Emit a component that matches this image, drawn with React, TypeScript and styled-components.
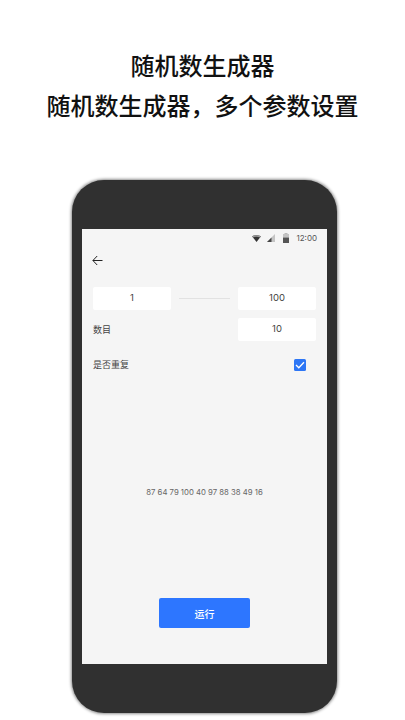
import React from 'react';
import styled, { createGlobalStyle } from 'styled-components';

const GlobalStyle = createGlobalStyle`
  html, body {
    margin: 0;
    padding: 0;
    background: #fff;
  }
  body {
    font-family: 'Inter', 'Noto Sans CJK SC', sans-serif;
  }
`;

const Page = styled.div`
  width: 405px;
  height: 720px;
  overflow: hidden;
  display: flex;
  flex-direction: column;
  align-items: center;
  background: #fff;
`;

const Heading = styled.h1`
  margin: 45px 0 55px;
  height: 80px;
  font-family: 'Noto Sans CJK SC', sans-serif;
  font-size: 24px;
  font-weight: 500;
  line-height: 40px;
  color: #111;
  text-align: center;
  white-space: nowrap;
`;

const Phone = styled.div`
  width: 265px;
  height: 533px;
  box-sizing: border-box;
  padding: 49px 10px;
  margin-left: 4px;
  border-radius: 32px;
  background: #303030;
  box-shadow: 0 0 3px 1px rgba(0, 0, 0, 0.45);
  flex-shrink: 0;
`;

const Screen = styled.div`
  height: 435px;
  background: #f5f5f5;
  display: flex;
  flex-direction: column;
`;

const StatusBar = styled.div`
  height: 18px;
  display: flex;
  align-items: center;
  justify-content: flex-end;
  padding: 0 10px;
  font-size: 8px;
  color: #555;
`;

const StatusIcon = styled.svg<{ $gap: number }>`
  margin-right: ${p => p.$gap}px;
`;

const BackRow = styled.div`
  height: 26px;
  padding-left: 10px;
  display: flex;
  align-items: center;
  color: #222;
`;

const Form = styled.div`
  padding: 14px 11px 0;
  display: flex;
  flex-direction: column;
  gap: 8px;
`;

const Row = styled.div`
  display: flex;
  align-items: center;
  justify-content: space-between;
  height: 23px;
`;

const Field = styled.div`
  width: 78px;
  height: 23px;
  line-height: 22px;
  border-radius: 2px;
  background: #fff;
  text-align: center;
  font-size: 9.5px;
  color: #444;
`;

const Divider = styled.div`
  width: 51px;
  height: 1px;
  background: #e2e2e2;
`;

const Label = styled.span`
  font-family: 'Noto Sans CJK SC', sans-serif;
  font-size: 9px;
  line-height: 21px;
  color: #444;
`;

const CheckRow = styled(Row)`
  margin-top: 4px;
  padding-right: 10px;
`;

const CheckBox = styled.div`
  width: 12px;
  height: 12px;
  border-radius: 1.5px;
  background: #2d76f5;
  display: flex;
  align-items: center;
  justify-content: center;
`;

const Result = styled.div`
  margin-top: 110px;
  text-align: center;
  font-size: 7.75px;
  line-height: 12px;
  color: #666;
`;

const RunButton = styled.button`
  align-self: center;
  width: 91px;
  height: 30px;
  margin-top: 100px;
  padding: 0;
  border: none;
  border-radius: 2px;
  background: #2d76ff;
  color: #fff;
  font-family: 'Noto Sans CJK SC', sans-serif;
  font-size: 10px;
  font-weight: 500;
`;

const App = () => (
  <Page>
    <GlobalStyle />
    <Heading>
      随机数生成器
      <br />
      随机数生成器，多个参数设置
    </Heading>
    <Phone>
      <Screen>
        <StatusBar>
          <StatusIcon $gap={6} width="9" height="7" viewBox="0 0 9 7">
            <path d="M0 1.2Q4.5-0.8 9 1.2L4.5 7z" fill="#333" />
            <path d="M0 1.2Q4.5-0.8 9 1.2L8 2.4Q4.5 0.9 1 2.4z" fill="#999" />
          </StatusIcon>
          <StatusIcon $gap={8} width="8" height="8" viewBox="0 0 8 8">
            <path d="M8 0v8H0z" fill="#c4c4c4" />
            <path d="M4.5 3.5V8H0z" fill="#444" />
          </StatusIcon>
          <StatusIcon $gap={7} width="6" height="10" viewBox="0 0 6 10">
            <rect x="1.5" y="0" width="3" height="1" fill="#bbb" />
            <rect x="0" y="1" width="6" height="3.5" fill="#c4c4c4" />
            <rect x="0" y="4.5" width="6" height="5.5" fill="#555" />
          </StatusIcon>
          <span>12:00</span>
        </StatusBar>
        <BackRow>
          <svg width="11" height="11" viewBox="0 0 11 11" fill="none" stroke="currentColor" strokeWidth="1">
            <path d="M10.5 5.5H1M5.2 1L0.9 5.5l4.3 4.5" />
          </svg>
        </BackRow>
        <Form>
          <Row>
            <Field>1</Field>
            <Divider />
            <Field>100</Field>
          </Row>
          <Row>
            <Label>数目</Label>
            <Field>10</Field>
          </Row>
          <CheckRow>
            <Label>是否重复</Label>
            <CheckBox>
              <svg width="10" height="8" viewBox="0 0 10 8" fill="none" stroke="#fff" strokeWidth="1.3">
                <path d="M1 4l2.8 2.8L9 1.2" />
              </svg>
            </CheckBox>
          </CheckRow>
        </Form>
        <Result>87 64 79 100 40 97 88 38 49 16</Result>
        <RunButton>运行</RunButton>
      </Screen>
    </Phone>
  </Page>
);

export default App;
